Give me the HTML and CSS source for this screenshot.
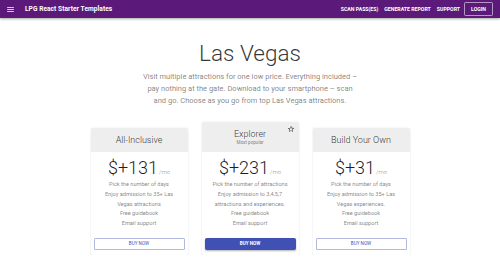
FILE: index.html
```html
<!DOCTYPE html>
<html>
<head>
    <meta charset="utf-8">
    <title>LPG React Starter Templates</title>
    <link rel="stylesheet" href="styles.css">
</head>
<body>
    <header class="appbar">
        <div class="toolbar">
            <button class="menu-btn" aria-label="menu">
                <svg viewBox="0 0 24 24" width="9" height="9"><path fill="#fff" d="M3 18h18v-2H3v2zm0-5h18v-2H3v2zm0-7v2h18V6H3z"/></svg>
            </button>
            <h1 class="brand">LPG React Starter Templates</h1>
            <nav class="nav">
                <a class="nav-link" href="#">Scan Pass(es)</a>
                <a class="nav-link" href="#">Generate Report</a>
                <a class="nav-link" href="#">Support</a>
                <a class="nav-link nav-login" href="#">Login</a>
            </nav>
        </div>
    </header>

    <main>
        <section class="hero">
            <h2 class="hero-title">Las Vegas</h2>
            <p class="hero-text">Visit multiple attractions for one low price. Everything included &ndash; pay nothing at the gate. Download to your smartphone &ndash; scan and go. Choose as you go from top Las Vegas attractions.</p>
        </section>

        <section class="tiers">
            <div class="card">
                <div class="card-head">
                    <div class="card-title">All-Inclusive</div>
                </div>
                <div class="card-body">
                    <div class="price"><span class="amount">$+131</span><span class="per">/mo</span></div>
                    <ul class="features">
                        <li>Pick the number of days</li>
                        <li>Enjoy admission to 35+ Las Vegas attractions</li>
                        <li>Free guidebook</li>
                        <li>Email support</li>
                    </ul>
                </div>
                <div class="card-actions"><button class="buy">Buy now</button></div>
            </div>

            <div class="card">
                <div class="card-head">
                    <div class="card-title">Explorer</div>
                    <div class="card-sub">Most popular</div>
                    <svg class="star" viewBox="0 0 24 24" width="8" height="8"><path fill="#444" d="M22 9.24l-7.19-.62L12 2 9.19 8.63 2 9.24l5.46 4.73L5.82 21 12 17.27 18.18 21l-1.63-7.03L22 9.24zM12 15.4l-3.76 2.27 1-4.28-3.32-2.88 4.38-.38L12 6.1l1.71 4.04 4.38.38-3.32 2.88 1 4.28L12 15.4z"/></svg>
                </div>
                <div class="card-body">
                    <div class="price"><span class="amount">$+231</span><span class="per">/mo</span></div>
                    <ul class="features">
                        <li>Pick the number of attractions</li>
                        <li>Enjoy admission to 3,4,5,7 attractions and experiences.</li>
                        <li>Free guidebook</li>
                        <li>Email support</li>
                    </ul>
                </div>
                <div class="card-actions"><button class="buy buy-main">Buy now</button></div>
            </div>

            <div class="card">
                <div class="card-head">
                    <div class="card-title">Build Your Own</div>
                </div>
                <div class="card-body">
                    <div class="price"><span class="amount">$+31</span><span class="per">/mo</span></div>
                    <ul class="features">
                        <li>Pick the number of days</li>
                        <li>Enjoy admission to 35+ Las Vegas experiences.</li>
                        <li>Free guidebook</li>
                        <li>Email support</li>
                    </ul>
                </div>
                <div class="card-actions"><button class="buy">Buy now</button></div>
            </div>
        </section>
    </main>
</body>
</html>
```

FILE: styles.css
```css
body {
    margin: 0;
    background: #fff;
    font-family: Roboto, "Liberation Sans", sans-serif;
    color: rgba(0, 0, 0, 0.87);
}

/* top bar */
.appbar {
    background: #5b1a79;
    color: #fff;
    box-shadow: 0 1px 2px rgba(0, 0, 0, 0.25), 0 1px 4px rgba(0, 0, 0, 0.12);
}
.toolbar {
    height: 18px;
    display: flex;
    align-items: center;
    padding: 0 7px 0 6px;
}
.menu-btn {
    border: 0;
    background: none;
    padding: 0;
    width: 9px;
    height: 9px;
    display: flex;
    margin-right: 10px;
}
.brand {
    flex: 1;
    margin: 0;
    font-size: 6.6px;
    font-weight: 700;
    letter-spacing: 0.05px;
}
.nav {
    display: flex;
    align-items: center;
}
.nav-link {
    color: #fff;
    text-decoration: none;
    text-transform: uppercase;
    font-size: 5.2px;
    font-weight: 700;
    padding: 2px 3px;
}
.nav-login {
    margin-left: 1px;
    padding: 3px 6px;
    border: 1px solid rgba(255, 255, 255, 0.55);
    border-radius: 1.5px;
}

/* hero */
.hero {
    max-width: 216px;
    margin: 0 auto;
    padding-top: 22px;
    text-align: center;
}
.hero-title {
    margin: 0 0 4px;
    font-size: 22.5px;
    font-weight: 300;
    line-height: 27px;
    color: rgba(0, 0, 0, 0.8);
}
.hero-text {
    margin: 0;
    font-size: 7.5px;
    line-height: 12px;
    color: rgba(0, 0, 0, 0.5);
}

/* pricing cards */
.tiers {
    display: flex;
    justify-content: center;
    align-items: flex-end;
    gap: 14px;
    margin-top: 15px;
}
.card {
    width: 97px;
    border-radius: 1.5px;
    background: #fff;
    box-shadow: 0 1px 1px rgba(0, 0, 0, 0.12), 0 0 2px rgba(0, 0, 0, 0.1);
    text-align: center;
}
.card-head {
    position: relative;
    background: #eeeeee;
    padding: 6px;
    border-radius: 1.5px 1.5px 0 0;
}
.card-title {
    font-size: 9px;
    font-weight: 300;
    line-height: 12px;
    color: rgba(0, 0, 0, 0.8);
}
.card-sub {
    font-size: 4.6px;
    line-height: 6px;
    color: rgba(0, 0, 0, 0.5);
}
.star {
    position: absolute;
    top: 3px;
    right: 4px;
}
.card-body {
    padding: 6px 4px 6px;
}
.price {
    display: flex;
    justify-content: center;
    align-items: baseline;
    height: 20px;
    margin-bottom: 2px;
}
.amount {
    font-size: 18px;
    font-weight: 300;
    line-height: 20px;
    color: rgba(0, 0, 0, 0.9);
}
.per {
    margin-left: 1px;
    font-size: 6px;
    font-weight: 300;
    color: rgba(0, 0, 0, 0.54);
}
.features {
    list-style: none;
    margin: 0;
    padding: 0 2px;
    font-size: 5.6px;
    line-height: 9.75px;
    color: rgba(0, 0, 0, 0.5);
}
.card-actions {
    padding: 3px 3px 5px;
}
.buy {
    display: block;
    width: 100%;
    height: 12px;
    padding: 0;
    font-family: inherit;
    font-size: 4.6px;
    font-weight: 400;
    text-transform: uppercase;
    color: #3f51b5;
    background: #fff;
    border: 0.6px solid rgba(63, 81, 181, 0.4);
    border-radius: 1.5px;
}
.buy-main {
    color: #fff;
    font-weight: 700;
    background: #3f51b5;
    border-color: #3f51b5;
    box-shadow: 0 1px 2px rgba(0, 0, 0, 0.3);
}
```
